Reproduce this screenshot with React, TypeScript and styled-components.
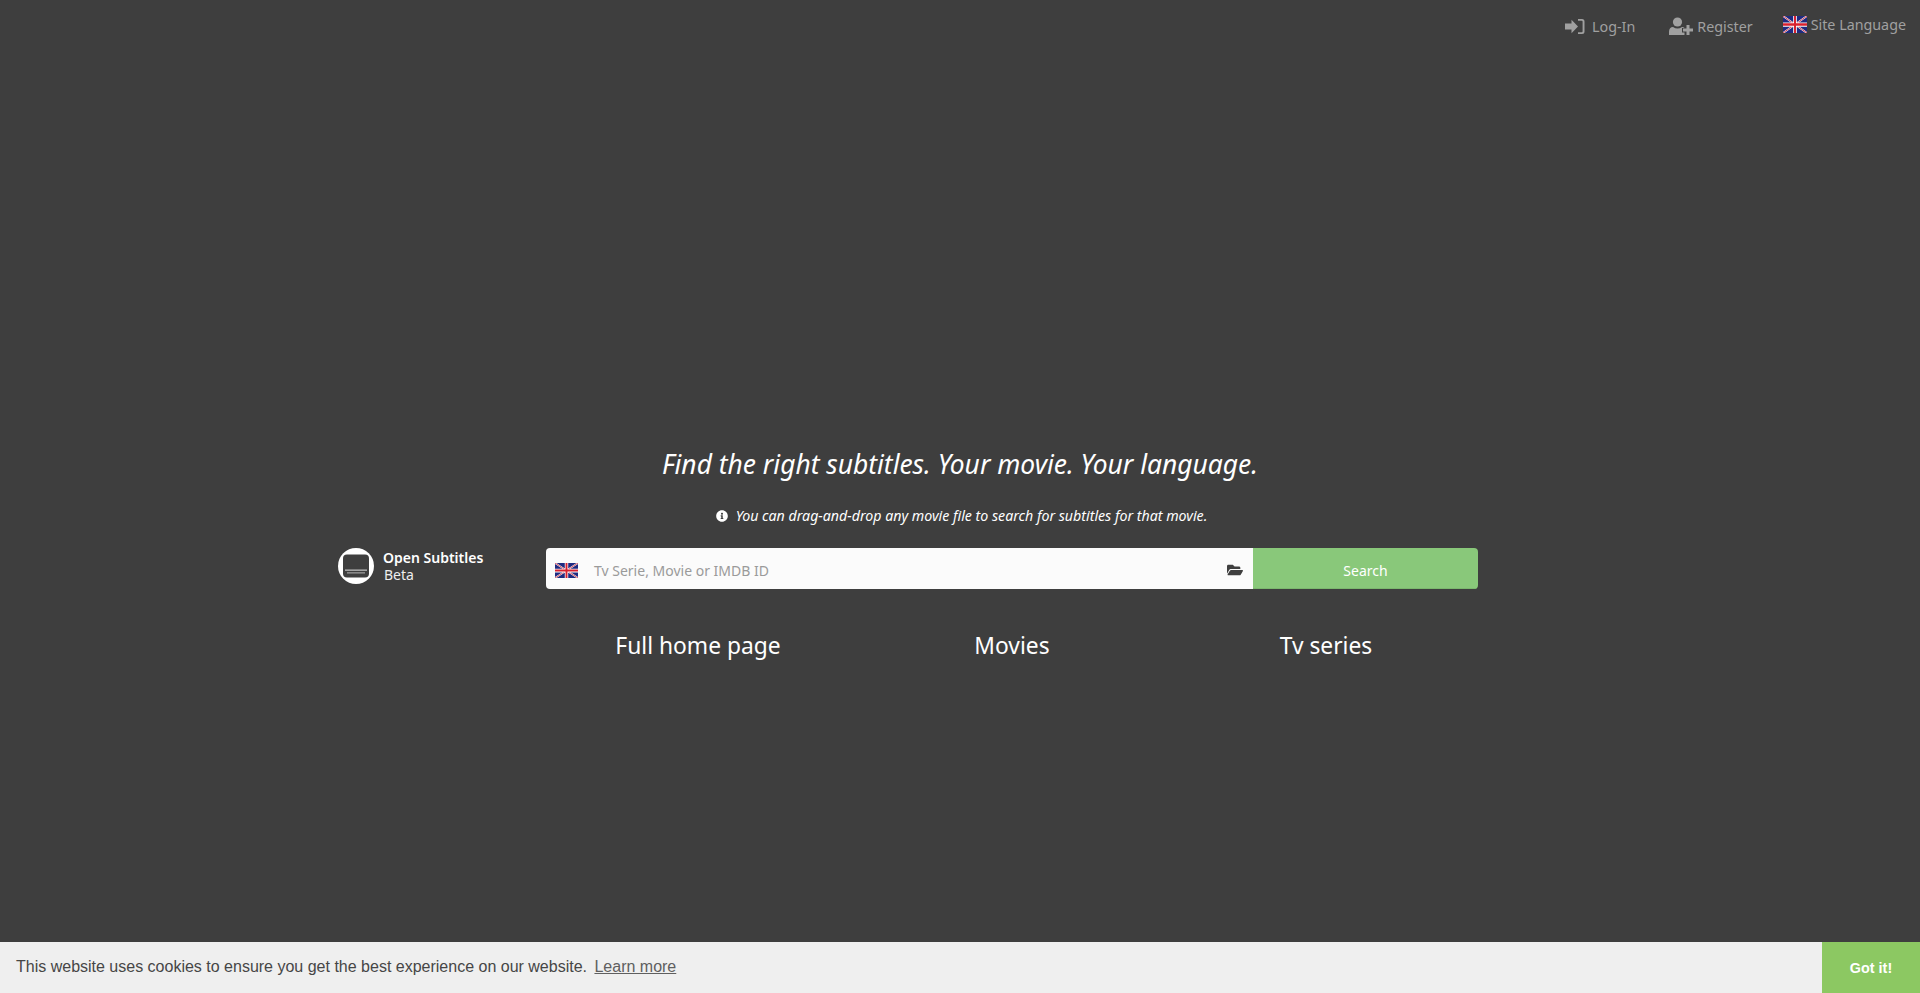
import React from "react";
import styled, { createGlobalStyle } from "styled-components";
import { FaInfoCircle, FaFolderOpen } from "react-icons/fa";

const Global = createGlobalStyle`
  html, body { margin: 0; padding: 0; height: 100%; background: #3e3e3e; }
  body { font-family: "Noto Sans", "Open Sans", sans-serif; overflow: hidden; }
`;

const Page = styled.div`
  height: 993px;
  display: flex;
  flex-direction: column;
  background: #3e3e3e;
  color: #fff;
`;

const TopNav = styled.nav`
  display: flex;
  justify-content: flex-end;
  align-items: center;
  height: 50px;
  padding-right: 14px;
  color: #a0a0a0;
  font-size: 14.3px;
`;

const NavItem = styled.a<{ $gap: number; $ml: number; $top: number }>`
  display: flex;
  align-items: center;
  gap: ${(p) => p.$gap}px;
  margin-left: ${(p) => p.$ml}px;
  margin-top: ${(p) => p.$top}px;
  svg { flex: none; }
`;

const Hero = styled.main`
  padding-top: 398px;
  display: flex;
  flex-direction: column;
  align-items: center;
`;

const Headline = styled.h1`
  margin: 0;
  font-size: 26.4px;
  line-height: 32px;
  font-weight: 400;
  font-style: italic;
`;

const Hint = styled.p`
  margin: 26px 0 0 3px;
  font-size: 14.2px;
  line-height: 20px;
  font-style: italic;
  display: flex;
  align-items: center;
  gap: 8px;
`;

const SearchRow = styled.div`
  align-self: flex-start;
  margin: 22px 0 0 338px;
  display: flex;
  align-items: center;
`;

const Brand = styled.div`
  width: 208px;
  margin-bottom: 5px;
  display: flex;
  align-items: center;
  gap: 9px;
`;

const BrandText = styled.div`
  display: flex;
  flex-direction: column;
  font-size: 14px;
  line-height: 17px;
  strong { font-weight: 600; }
  span { margin-left: 1px; color: #eee; }
`;

const SearchBox = styled.form`
  width: 932px;
  height: 41px;
  display: flex;
  border-radius: 4px;
  overflow: hidden;
`;

const InputWrap = styled.div`
  width: 707px;
  display: flex;
  align-items: center;
  background: #fbfbfb;
  padding: 3px 10px 0 9px;
  box-sizing: border-box;
  color: #9a9a9a;
  font-size: 14px;
`;

const Placeholder = styled.span`
  flex: 1;
  margin-left: 16px;
`;

const SearchButton = styled.button`
  flex: 1;
  border: 0;
  padding: 4px 0 0;
  background: #89c87a;
  border-bottom: 1px solid #7cb86e;
  color: #fff;
  font: inherit;
  font-size: 14px;
`;

const LinkRow = styled.div`
  align-self: flex-start;
  margin: 41px 0 0 541px;
  width: 942px;
  display: grid;
  grid-template-columns: repeat(3, 1fr);
`;

const BigLink = styled.a`
  text-align: center;
  font-size: 22.8px;
  line-height: 32px;
`;

const CookieBar = styled.div`
  position: fixed;
  left: 0;
  right: 0;
  bottom: 0;
  height: 51px;
  display: flex;
  align-items: center;
  justify-content: space-between;
  background: #efefef;
  color: #464646;
  font-family: "Liberation Sans", Arial, sans-serif;
  font-size: 16px;
`;

const CookieText = styled.span`
  padding: 0 0 2px 16px;
  a { margin-left: 3px; text-decoration: underline; opacity: 0.85; }
`;

const GotIt = styled.button`
  width: 98px;
  height: 100%;
  border: 0;
  background: #8cc862;
  color: #fff;
  font: inherit;
  font-size: 14.4px;
  font-weight: 700;
`;

const Flag = ({ w, h }: { w: number; h: number }) => (
  <svg width={w} height={h} viewBox="0 0 60 36" preserveAspectRatio="none">
    <rect width="60" height="36" fill="#1f2a80" />
    <path d="M0 0L60 36M60 0L0 36" stroke="#fff" strokeWidth="4" />
    <path d="M0 0L60 36M60 0L0 36" stroke="#c8283c" strokeWidth="2" />
    <path d="M30 0V36M0 18H60" stroke="#fff" strokeWidth="9" />
    <path d="M30 0V36M0 18H60" stroke="#d8202f" strokeWidth="5" />
  </svg>
);

const Logo = () => (
  <svg width="36" height="36" viewBox="0 0 36 36">
    <circle cx="18" cy="18" r="18" fill="#fff" />
    <rect x="5" y="6.5" width="26" height="23" rx="4" fill="#3e3e3e" />
    <rect x="7" y="21.5" width="22" height="1.3" fill="#bbb" />
    <rect x="9" y="24.2" width="18" height="1.3" fill="#999" />
  </svg>
);

const SignInIcon = () => (
  <svg width="20" height="17" viewBox="0 0 20 17" fill="currentColor">
    <path d="M0 5.5H6.5V1.8L13 8.5L6.5 15.2V11.5H0Z" />
    <path d="M13 1H17A2.5 2.5 0 0 1 19.5 3.5V13.5A2.5 2.5 0 0 1 17 16H13V14.2H16.6A1 1 0 0 0 17.6 13.2V3.8A1 1 0 0 0 16.6 2.8H13Z" />
  </svg>
);

const UserPlusIcon = () => (
  <svg width="24" height="18" viewBox="0 0 24 18" fill="currentColor">
    <circle cx="8.5" cy="5" r="4.6" />
    <path d="M0 18V14.5C0 11.8 1.6 10 4 10C5.5 11 7 11.5 8.5 11.5C10 11.5 11.5 11 13 10C14 10 15 10.4 15.6 11H13V15.5H15.5V18Z" />
    <path d="M17.5 8H20.5V11.5H24V14.5H20.5V18H17.5V14.5H14V11.5H17.5Z" />
  </svg>
);

export default function App() {
  return (
    <Page>
      <Global />
      <TopNav>
        <NavItem $gap={7} $ml={0} $top={2}><SignInIcon />Log-In</NavItem>
        <NavItem $gap={4} $ml={34} $top={2}><UserPlusIcon />Register</NavItem>
        <NavItem $gap={4} $ml={30} $top={-1}><Flag w={24} h={17} />Site Language</NavItem>
      </TopNav>
      <Hero>
        <Headline>Find the right subtitles. Your movie. Your language.</Headline>
        <Hint><FaInfoCircle size={12} />You can drag-and-drop any movie file to search for subtitles for that movie.</Hint>
        <SearchRow>
          <Brand>
            <Logo />
            <BrandText>
              <strong>Open Subtitles</strong>
              <span>Beta</span>
            </BrandText>
          </Brand>
          <SearchBox>
            <InputWrap>
              <Flag w={23} h={15} />
              <Placeholder>Tv Serie, Movie or IMDB ID</Placeholder>
              <FaFolderOpen size={16} color="#3e3e3e" />
            </InputWrap>
            <SearchButton type="button">Search</SearchButton>
          </SearchBox>
        </SearchRow>
        <LinkRow>
          <BigLink>Full home page</BigLink>
          <BigLink>Movies</BigLink>
          <BigLink>Tv series</BigLink>
        </LinkRow>
      </Hero>
      <CookieBar>
        <CookieText>This website uses cookies to ensure you get the best experience on our website. <a>Learn more</a></CookieText>
        <GotIt type="button">Got it!</GotIt>
      </CookieBar>
    </Page>
  );
}
